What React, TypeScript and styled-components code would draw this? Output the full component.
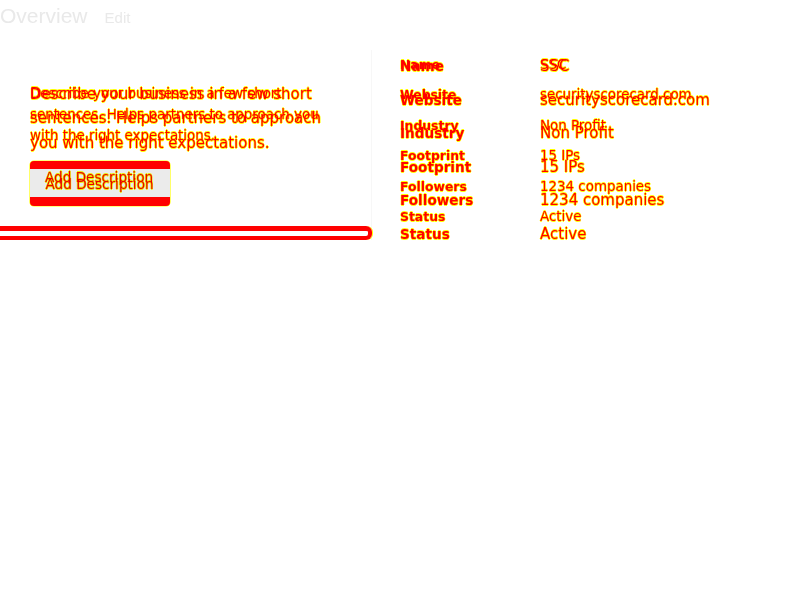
import React from "react";
import styled, { createGlobalStyle } from "styled-components";

const GlobalStyle = createGlobalStyle`
  html, body { margin: 0; padding: 0; background: #ffffff; }
  body { font-family: "DejaVu Sans", "Liberation Sans", sans-serif; }
`;

const Page = styled.div`
  width: 800px;
  height: 600px;
  display: flex;
  flex-direction: column;
  background: #ffffff;
`;

const Header = styled.header`
  height: 50px;
  display: flex;
  align-items: baseline;
  gap: 17px;
  padding-top: 1px;
  box-sizing: border-box;
  font-family: "Liberation Sans", Arial, sans-serif;
`;

const Title = styled.h1`
  margin: 0;
  font-size: 21px;
  font-weight: 400;
  line-height: 30px;
  color: #e9e9e9;
`;

const EditLink = styled.span`
  font-size: 15px;
  color: #e9e9e9;
`;

const Body = styled.main`
  display: flex;
  align-items: flex-start;
`;

const Card = styled.section`
  width: 372px;
  box-sizing: border-box;
  padding-left: 30px;
  display: flex;
  flex-direction: column;
  align-items: flex-start;
  border-right: 1px solid #f7f7f7;
`;

const Stack = styled.div`
  display: grid;
  align-items: start;
  & > * { grid-area: 1 / 1; }
`;

const Layer = styled.div<{ $top: number }>`
  padding-top: ${(p) => p.$top}px;
  mix-blend-mode: multiply;
`;

const diffText = `
  color: #ff0000;
  text-shadow: 0.6px 0 0 #ffff00, -0.6px 0 0 #ffff00, 0 0.6px 0 #ffff00, 0 -0.6px 0 #ffff00;
`;

const Description = styled.p<{ $size: number; $lh: number }>`
  margin: 0;
  width: 300px;
  font-size: ${(p) => p.$size}px;
  line-height: ${(p) => p.$lh}px;
  ${diffText}
`;

const ButtonFrame = styled.div`
  margin-top: 5.5px;
  width: 140px;
  height: 45px;
  box-sizing: border-box;
  padding: 8px 0 9px;
  background: #ff0000;
  border-radius: 4px;
  box-shadow: 0 0 0 0.6px #ffff00;
  display: flex;
`;

const ButtonFace = styled.div`
  flex: 1;
  background: #ebebeb;
  display: grid;
  align-items: start;
  & > * { grid-area: 1 / 1; }
`;

const ButtonLabel = styled.span<{ $dx: number; $dy: number }>`
  font-size: 13.6px;
  line-height: 15px;
  padding-left: ${(p) => 15 + p.$dx}px;
  padding-top: ${(p) => p.$dy}px;
  mix-blend-mode: multiply;
  white-space: nowrap;
  ${diffText}
`;

const BottomBar = styled.div`
  margin-top: 20px;
  margin-left: -30px;
  width: 372px;
  height: 14px;
  box-sizing: border-box;
  border: 4px solid #ff0000;
  border-top-width: 5px;
  border-left: none;
  border-radius: 0 6px 6px 0;
  box-shadow: 1px 0 0 0 #ffff00;
`;

const Details = styled.section`
  margin-left: 28px;
  display: grid;
  align-items: start;
  & > * { grid-area: 1 / 1; }
`;

const Rows = styled.dl<{ $top: number }>`
  margin: 0;
  padding-top: ${(p) => p.$top}px;
  display: grid;
  grid-template-columns: 140px auto;
  align-content: start;
  mix-blend-mode: multiply;
`;

const Label = styled.dt<{ $size: number; $lh: number }>`
  margin: 0;
  font-weight: 700;
  font-size: ${(p) => p.$size}px;
  line-height: ${(p) => p.$lh}px;
  white-space: nowrap;
  ${diffText}
`;

const Value = styled.dd<{ $size: number; $lh: number }>`
  margin: 0;
  font-size: ${(p) => p.$size}px;
  line-height: ${(p) => p.$lh}px;
  white-space: nowrap;
  ${diffText}
`;

const details: [string, string][] = [
  ["Name", "SSC"],
  ["Website", "securityscorecard.com"],
  ["Industry", "Non Profit"],
  ["Footprint", "15 IPs"],
  ["Followers", "1234 companies"],
  ["Status", "Active"],
];

const text =
  "Describe your business in a few short sentences. Helps partners to approach you with the right expectations.";

const variants = [
  { desc: 13.4, descLh: 21, descTop: 32.5, label: 12.4, value: 13.4, row: 30.4, rowTop: -1.5 },
  { desc: 15, descLh: 24.5, descTop: 31.5, label: 13.6, value: 15, row: 33.6, rowTop: -1.8 },
];

export default function App() {
  return (
    <Page>
      <GlobalStyle />
      <Header>
        <Title>Overview</Title>
        <EditLink>Edit</EditLink>
      </Header>
      <Body>
        <Card>
          <Stack>
            {variants.map((v, i) => (
              <Layer key={i} $top={v.descTop}>
                <Description $size={v.desc} $lh={v.descLh}>
                  {text}
                </Description>
              </Layer>
            ))}
          </Stack>
          <ButtonFrame>
            <ButtonFace>
              <ButtonLabel $dx={0} $dy={1.5}>Add Description</ButtonLabel>
              <ButtonLabel $dx={0.5} $dy={8.5}>Add Description</ButtonLabel>
            </ButtonFace>
          </ButtonFrame>
          <BottomBar />
        </Card>
        <Details>
          {variants.map((v, i) => (
            <Rows key={i} $top={v.rowTop}>
              {details.map(([k, val]) => (
                <React.Fragment key={k}>
                  <Label $size={v.label} $lh={v.row}>{k}</Label>
                  <Value $size={v.value} $lh={v.row}>{val}</Value>
                </React.Fragment>
              ))}
            </Rows>
          ))}
        </Details>
      </Body>
    </Page>
  );
}
